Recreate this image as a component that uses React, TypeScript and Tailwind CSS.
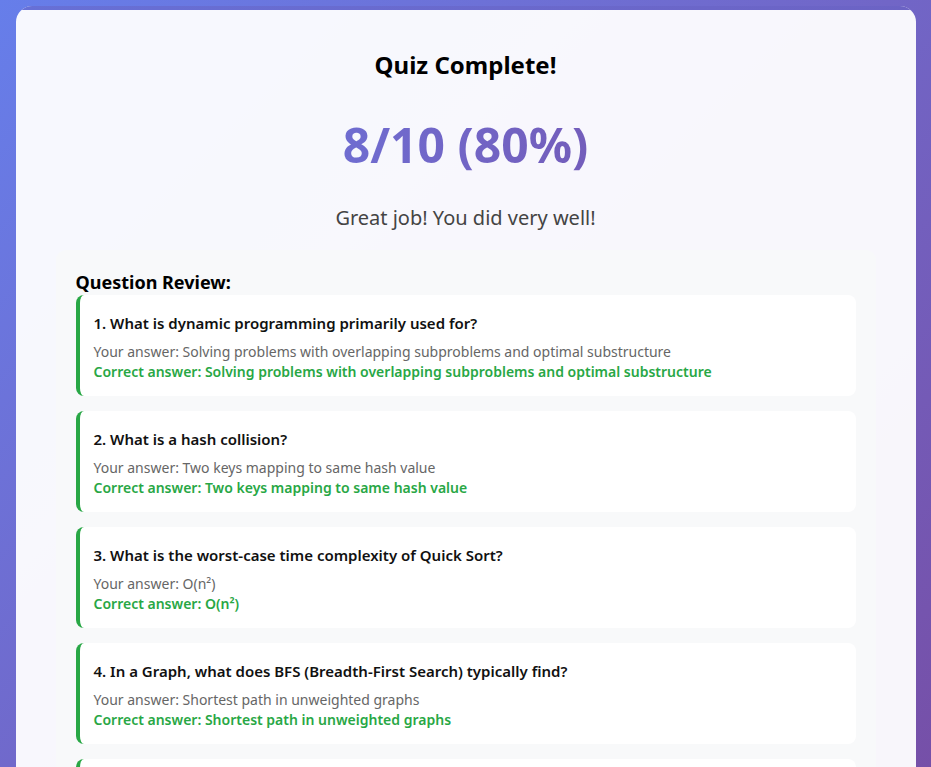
import React from "react";

const items = [
  {
    q: "1. What is dynamic programming primarily used for?",
    a: "Solving problems with overlapping subproblems and optimal substructure",
  },
  { q: "2. What is a hash collision?", a: "Two keys mapping to same hash value" },
  { q: "3. What is the worst-case time complexity of Quick Sort?", a: "O(n²)" },
  {
    q: "4. In a Graph, what does BFS (Breadth-First Search) typically find?",
    a: "Shortest path in unweighted graphs",
  },
  { q: "5. What is the time complexity of binary search?", a: "O(log n)" },
];

export default function App() {
  return (
    <div
      className="min-h-[767px] bg-gradient-to-br from-[#667eea] to-[#764ba2] pt-[6px]"
      style={{ fontFamily: '"Noto Sans", "Open Sans", sans-serif' }}
    >
      <div className="relative mx-auto w-[900px] overflow-hidden rounded-[16px] bg-white/95 px-[40px] pt-[44px] pb-[40px]">
        <div className="absolute left-0 right-0 top-0 h-[4px] bg-gradient-to-r from-[#6770d6] to-[#6c63c4]" />
        <h2 className="text-center text-[24px] font-bold leading-[30px] text-black">Quiz Complete!</h2>
        <div className="mt-[36px] bg-gradient-to-r from-[#667eea] to-[#764ba2] bg-clip-text text-center text-[48px] font-bold leading-[58px] text-transparent">
          8/10 (80%)
        </div>
        <p className="mt-[30px] text-center text-[20px] leading-[28px] text-[#444]">
          Great job! You did very well!
        </p>
        <div className="mt-[18px] rounded-[10px] bg-[#f8f9fa] p-[20px]">
          <h3 className="text-[18px] font-bold leading-[25px] text-black">Question Review:</h3>
          <div className="flex flex-col gap-[15px]">
            {items.map((it) => (
              <div
                key={it.q}
                className="rounded-[8px] border-l-4 border-[#28a745] bg-white pt-[16px] pb-[14px] pl-[14px] pr-[15px]"
              >
                <div className="mb-[7px] text-[15px] font-semibold leading-[24px] text-[#111]">{it.q}</div>
                <div className="text-[14px] leading-[20px] text-[#666]">Your answer: {it.a}</div>
                <div className="text-[14px] font-semibold leading-[20px] text-[#28a745]">
                  Correct answer: {it.a}
                </div>
              </div>
            ))}
          </div>
        </div>
      </div>
    </div>
  );
}
